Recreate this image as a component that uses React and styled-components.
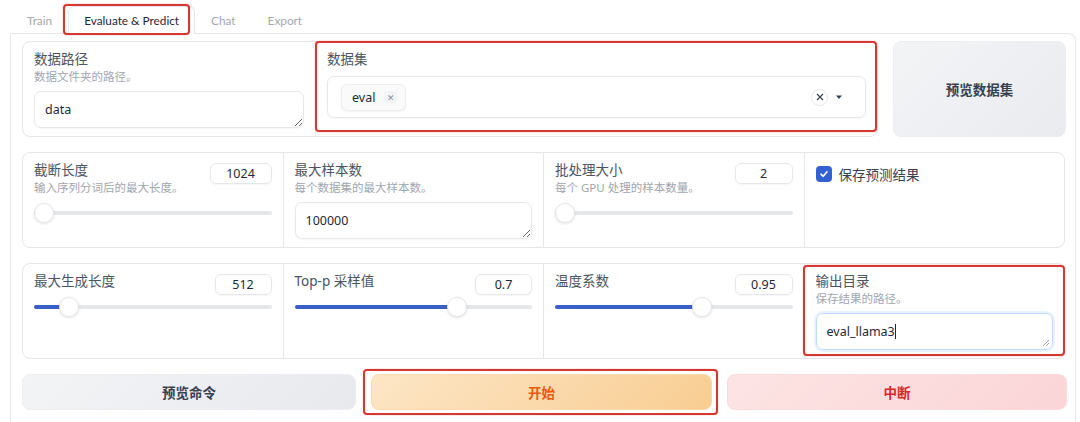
import React from "react";
import styled, { createGlobalStyle } from "styled-components";

const Global = createGlobalStyle`
  html, body { margin: 0; padding: 0; background: #ffffff; }
  body { font-family: "Noto Sans", "Noto Sans CJK SC", sans-serif; color: #1f2937; }
  * { box-sizing: border-box; }
`;

const Page = styled.div`
  position: relative;
  width: 1080px;
  height: 422px;
  overflow: hidden;
  padding: 6px 4px 0 10px;
`;

const TabBar = styled.div`
  display: flex;
  height: 27px;
  position: relative;
  z-index: 1;
`;

const Tab = styled.div`
  padding: 0 15px;
  height: 28px;
  display: flex;
  align-items: center;
  font-family: "Lato", "Noto Sans", sans-serif;
  font-size: 11.8px;
  color: ${(p) => (p.$active ? "#1f2937" : "#a3a8b1")};
  background: ${(p) => (p.$active ? "#ffffff" : "transparent")};
  border: 1px solid ${(p) => (p.$active ? "#e5e7eb" : "transparent")};
  border-bottom: none;
  border-radius: 6px 6px 0 0;
  margin-left: ${(p) => (p.$first ? "1px" : "0")};
`;

const Panel = styled.div`
  border: 1px solid #e5e7eb;
  border-radius: 0 8px 0 0;
  border-bottom: none;
  padding: 7px 10px 0 11px;
  height: 400px;
  display: flex;
  flex-direction: column;
  gap: 15px;
`;

const TopRow = styled.div`
  display: grid;
  grid-template-columns: 856px 173px;
  gap: 15px;
  height: 96px;
`;

const Form = styled.div`
  display: grid;
  grid-template-columns: ${(p) => p.$cols};
  gap: 1px;
  background: #e5e7eb;
  border: 1px solid #e5e7eb;
  border-radius: 8px;
  overflow: hidden;
  height: ${(p) => p.$h || "96px"};
`;

const Cell = styled.div`
  background: #ffffff;
  padding: 9px 11px 0 11px;
  display: flex;
  flex-direction: column;
  min-width: 0;
`;

const Header = styled.div`
  display: flex;
  justify-content: space-between;
  align-items: flex-start;
`;

const LabelGroup = styled.div`
  display: flex;
  flex-direction: column;
`;

const Label = styled.div`
  font-size: 13.5px;
  line-height: 17px;
  color: #4b5563;
`;

const Info = styled.div`
  font-size: 11.5px;
  line-height: 17px;
  color: #a0a6b0;
`;

const NumberBox = styled.div`
  width: ${(p) => p.$w || 60}px;
  height: 21px;
  border: 1px solid #e5e7eb;
  border-radius: 6px;
  display: flex;
  align-items: center;
  justify-content: center;
  font-size: 12.5px;
  color: #1f2937;
  box-shadow: 0 1px 2px rgba(0,0,0,0.04);
  margin-top: 1px;
`;

const TextArea = styled.textarea`
  margin-top: 6px;
  width: 100%;
  height: 37px;
  resize: vertical;
  border: 1px solid #e5e7eb;
  border-radius: 7px;
  padding: 9px 10px;
  font-family: "Noto Sans", "Noto Sans CJK SC", sans-serif;
  font-size: 12.5px;
  line-height: 17px;
  color: #1f2937;
  outline: none;
  box-shadow: 0 1px 2px rgba(0,0,0,0.04);
  background: #ffffff;
  overflow: hidden;
`;

const Caret = styled.span`
  display: inline-block;
  width: 1px;
  height: 15px;
  background: #1f2937;
  vertical-align: -3px;
`;

const FakeArea = styled.div`
  position: relative;
  margin-top: 6px;
  height: 37px;
  border: 1px solid #bfdbfe;
  border-radius: 7px;
  padding: 9px 10px;
  font-size: 12.5px;
  line-height: 17px;
  color: #1f2937;
  box-shadow: 0 0 0 2px rgba(219,234,254,0.6);
`;

const Grip = styled.svg`
  position: absolute;
  right: 2px;
  bottom: 2px;
`;

const SliderWrap = styled.div`
  position: relative;
  margin-top: ${(p) => p.$mt}px;
  height: 20px;
`;

const Track = styled.div`
  position: absolute;
  left: 0;
  right: 0;
  top: 8px;
  height: 4px;
  border-radius: 2px;
  background: #e5e7eb;
`;

const Fill = styled.div`
  position: absolute;
  left: 0;
  top: 8px;
  height: 4px;
  border-radius: 2px;
  background: #3b5fc9;
`;

const Thumb = styled.div`
  position: absolute;
  top: 0;
  width: 20px;
  height: 20px;
  border-radius: 50%;
  background: #ffffff;
  border: 1px solid #e5e7eb;
  box-shadow: 0 1px 3px rgba(0,0,0,0.12);
`;

const Dropdown = styled.div`
  margin-top: 8px;
  height: 42px;
  border: 1px solid #e5e7eb;
  border-radius: 7px;
  display: flex;
  align-items: center;
  padding: 0 22px 0 13px;
  box-shadow: 0 1px 2px rgba(0,0,0,0.04);
`;

const Chip = styled.div`
  display: flex;
  align-items: center;
  gap: 9px;
  height: 27px;
  padding: 0 8px 0 10px;
  border: 1px solid #eceef1;
  border-radius: 6px;
  background: #fafafa;
  box-shadow: 0 1px 2px rgba(0,0,0,0.05);
  font-size: 12.5px;
  color: #1f2937;
`;

const ChipX = styled.span`
  width: 13px;
  height: 13px;
  display: flex;
  align-items: center;
  justify-content: center;
  background: #f3f4f6;
  border-radius: 3px;
  font-size: 9px;
  color: #8b919b;
`;

const Spacer = styled.div`
  flex: 1;
`;

const ClearBtn = styled.span`
  width: 17px;
  height: 17px;
  border-radius: 50%;
  border: 1px solid #e5e7eb;
  display: flex;
  align-items: center;
  justify-content: center;
  margin-right: 7px;
`;

const Button = styled.div`
  display: flex;
  align-items: center;
  justify-content: center;
  border-radius: 8px;
  font-size: 13.5px;
  font-weight: 700;
  color: ${(p) => p.$color};
  background: ${(p) => p.$bg};
  border: 1px solid ${(p) => p.$border};
  height: ${(p) => p.$h || "36px"};
`;

const ButtonRow = styled.div`
  display: grid;
  grid-template-columns: 334px 341px 340px;
  gap: 15px;
`;

const CheckRow = styled.div`
  display: flex;
  align-items: center;
  gap: 7px;
  font-size: 13.5px;
  color: #374151;
  padding-top: 2px;
`;

const CheckBox = styled.span`
  width: 16px;
  height: 16px;
  border-radius: 4px;
  background: #3461d1;
  display: flex;
  align-items: center;
  justify-content: center;
`;

const Highlight = styled.div`
  position: absolute;
  border: 2px solid #d6382f;
  border-radius: 4px;
  box-shadow: 0 0 2px rgba(214,56,47,0.35);
  pointer-events: none;
  z-index: 2;
`;

function Slider({ pct, mt }) {
  return (
    <SliderWrap $mt={mt}>
      <Track />
      <Fill style={{ width: `calc(${pct} * (100% - 20px) + 4px)` }} />
      <Thumb style={{ left: `calc(${pct} * (100% - 20px))` }} />
    </SliderWrap>
  );
}

function GripIcon() {
  return (
    <Grip width="8" height="8" viewBox="0 0 8 8">
      <path d="M7 1 L1 7 M7 4 L4 7" stroke="#9ca3af" strokeWidth="1" />
    </Grip>
  );
}

function SliderCell({ label, info, value, pct, w }) {
  return (
    <Cell>
      <Header>
        <LabelGroup>
          <Label>{label}</Label>
          {info && <Info>{info}</Info>}
        </LabelGroup>
        <NumberBox $w={w}>{value}</NumberBox>
      </Header>
      <Slider pct={pct} mt={info ? 7 : 2} />
    </Cell>
  );
}

export default function App() {
  return (
    <>
      <Global />
      <Page>
        <TabBar>
          <Tab $first>Train</Tab>
          <Tab $active>Evaluate &amp; Predict</Tab>
          <Tab>Chat</Tab>
          <Tab>Export</Tab>
        </TabBar>
        <Panel>
          <TopRow>
            <Form $cols="292px 1fr">
              <Cell>
                <Label>数据路径</Label>
                <Info>数据文件夹的路径。</Info>
                <TextArea defaultValue="data" readOnly />
              </Cell>
              <Cell>
                <Label>数据集</Label>
                <Dropdown>
                  <Chip>
                    eval
                    <ChipX>✕</ChipX>
                  </Chip>
                  <Spacer />
                  <ClearBtn>
                    <svg width="8" height="8" viewBox="0 0 8 8">
                      <path d="M1 1 L7 7 M7 1 L1 7" stroke="#374151" strokeWidth="1.2" />
                    </svg>
                  </ClearBtn>
                  <svg width="8" height="6" viewBox="0 0 8 6">
                    <path d="M1 1.5 L7 1.5 L4 5 Z" fill="#374151" />
                  </svg>
                </Dropdown>
              </Cell>
            </Form>
            <Button
              $h="96px"
              $color="#374151"
              $bg="linear-gradient(135deg, #f3f4f6, #e9ebef)"
              $border="#eceef1"
            >
              预览数据集
            </Button>
          </TopRow>

          <Form $cols="1fr 1fr 1fr 1fr" $h="96px">
            <SliderCell label="截断长度" info="输入序列分词后的最大长度。" value="1024" pct={0.0} w={62} />
            <Cell>
              <Label>最大样本数</Label>
              <Info>每个数据集的最大样本数。</Info>
              <TextArea defaultValue="100000" readOnly />
            </Cell>
            <SliderCell label="批处理大小" info="每个 GPU 处理的样本数量。" value="2" pct={0.0} w={58} />
            <Cell>
              <CheckRow>
                <CheckBox>
                  <svg width="10" height="10" viewBox="0 0 10 10">
                    <path d="M2 5.2 L4.2 7.3 L8 2.8" stroke="#fff" strokeWidth="1.6" fill="none" strokeLinecap="round" strokeLinejoin="round" />
                  </svg>
                </CheckBox>
                保存预测结果
              </CheckRow>
            </Cell>
          </Form>

          <Form $cols="1fr 1fr 1fr 1fr" $h="96px">
            <SliderCell label="最大生成长度" value="512" pct={0.115} w={57} />
            <SliderCell label="Top-p 采样值" value="0.7" pct={0.7} w={57} />
            <SliderCell label="温度系数" value="0.95" pct={0.63} w={58} />
            <Cell>
              <Label>输出目录</Label>
              <Info>保存结果的路径。</Info>
              <FakeArea>
                eval_llama3<Caret />
                <GripIcon />
              </FakeArea>
            </Cell>
          </Form>

          <ButtonRow>
            <Button $color="#374151" $bg="linear-gradient(135deg, #f3f4f6, #e7e9ed)" $border="#eceef1">
              预览命令
            </Button>
            <Button $color="#ea580c" $bg="linear-gradient(135deg, #fde6c6, #f8cd92)" $border="#f9d8ab">
              开始
            </Button>
            <Button $color="#dc2626" $bg="linear-gradient(135deg, #fde4e4, #fbd5d7)" $border="#fadcdc">
              中断
            </Button>
          </ButtonRow>
        </Panel>

        <Highlight style={{ left: 63, top: 4, width: 127, height: 31 }} />
        <Highlight style={{ left: 315, top: 41, width: 562, height: 91 }} />
        <Highlight style={{ left: 803, top: 265, width: 262, height: 91 }} />
        <Highlight style={{ left: 363, top: 369, width: 355, height: 46 }} />
      </Page>
    </>
  );
}
